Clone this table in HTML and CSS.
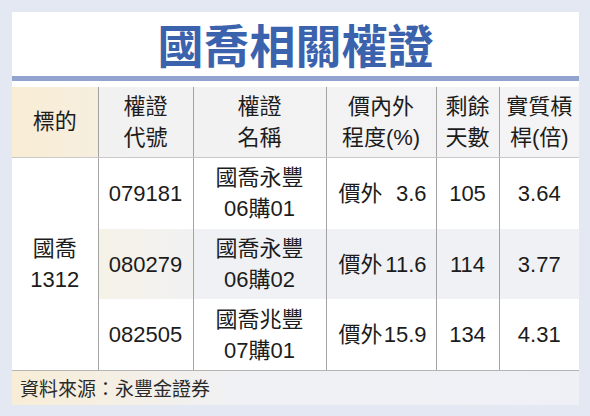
FILE: index.html
```html
<!DOCTYPE html>
<html lang="zh-Hant">
<head>
<meta charset="utf-8">
<link rel="stylesheet" href="styles.css">
</head>
<body>
<div class="panel">
  <h1 class="title">國喬相關權證</h1>
  <div class="rule"></div>
  <table class="grid">
    <colgroup>
      <col class="c1"><col class="c2"><col class="c3"><col class="c4"><col class="c5"><col class="c6">
    </colgroup>
    <thead>
      <tr class="head">
        <th class="first">標的</th>
        <th>權證<br>代號</th>
        <th>權證<br>名稱</th>
        <th>價內外<br>程度(%)</th>
        <th>剩餘<br>天數</th>
        <th>實質槓<br>桿(倍)</th>
      </tr>
    </thead>
    <tbody>
      <tr class="r1">
        <td class="first" rowspan="3">國喬<br>1312</td>
        <td>079181</td>
        <td>國喬永豐<br>06購01</td>
        <td><span class="moneyness"><span>價外</span><span class="num">3.6</span></span></td>
        <td>105</td>
        <td>3.64</td>
      </tr>
      <tr class="r2 alt">
        <td>080279</td>
        <td>國喬永豐<br>06購02</td>
        <td><span class="moneyness"><span>價外</span><span class="num">11.6</span></span></td>
        <td>114</td>
        <td>3.77</td>
      </tr>
      <tr class="r3">
        <td>082505</td>
        <td>國喬兆豐<br>07購01</td>
        <td><span class="moneyness"><span>價外</span><span class="num">15.9</span></span></td>
        <td>134</td>
        <td>4.31</td>
      </tr>
    </tbody>
  </table>
  <div class="source">資料來源：永豐金證券</div>
</div>
</body>
</html>
```

FILE: styles.css
```css
html, body {
  margin: 0;
  padding: 0;
  background: #e4e8f3;
}
body {
  width: 590px;
  height: 416px;
  overflow: hidden;
  font-family: "Liberation Sans", "Noto Sans CJK TC", sans-serif;
  color: #1c1c1c;
}
.panel {
  margin: 12px 11px 0 12px;
  width: 567px;
  height: 393px;
  background: #ffffff;
  display: flex;
  flex-direction: column;
}
.title {
  margin: 0;
  height: 64px;
  line-height: 62px;
  text-align: center;
  font-family: "Noto Sans CJK TC", sans-serif;
  font-weight: 700;
  font-size: 46px;
  color: #3b63ad;
  letter-spacing: 0;
}
.rule {
  height: 5px;
  background: #93a3d0;
  margin-bottom: 6px;
}
.grid {
  border-collapse: collapse;
  table-layout: fixed;
  width: 567px;
  font-size: 22px;
  line-height: 31px;
}
.c1 { width: 86px; }
.c2 { width: 95px; }
.c3 { width: 133px; }
.c4 { width: 110px; }
.c5 { width: 63px; }
.c6 { width: 80px; }
.grid th, .grid td {
  padding: 0;
  text-align: center;
  vertical-align: middle;
  border-left: 1px solid #a3a3a3;
  font-weight: 400;
}
.grid th:first-child, .grid td.first {
  border-left: none;
}
.head {
  height: 70px;
  background: linear-gradient(90deg, #f1f1f1, #f4f4f6);
}
.head th {
  border-bottom: 1px solid #c9c9c9;
}
.head th.first {
  background: linear-gradient(90deg, #f9edd4, #f6eedf);
}
.r1 { height: 72px; }
.r2 { height: 70px; }
.r3 { height: 71px; }
.alt td {
  background: linear-gradient(90deg, #f4f1e6, #eff0f4);
}
.alt td + td {
  background: #f0f1f4;
}
.alt td:first-child {
  background: linear-gradient(90deg, #f5f2e7, #f1f1f2);
}
td.first {
  background: #ffffff;
}
.moneyness {
  display: flex;
  justify-content: space-between;
  width: 88px;
  margin: 0 0 0 12px;
}
.source {
  height: 35px;
  line-height: 34px;
  border-top: 1px solid #b4b4b4;
  box-sizing: border-box;
  padding-left: 8px;
  font-family: "Noto Sans CJK TC", sans-serif;
  font-size: 19px;
  color: #2a2a2a;
  background: linear-gradient(90deg, #f8edd6, #f0f1f5 40%, #eff0f5);
}
```
